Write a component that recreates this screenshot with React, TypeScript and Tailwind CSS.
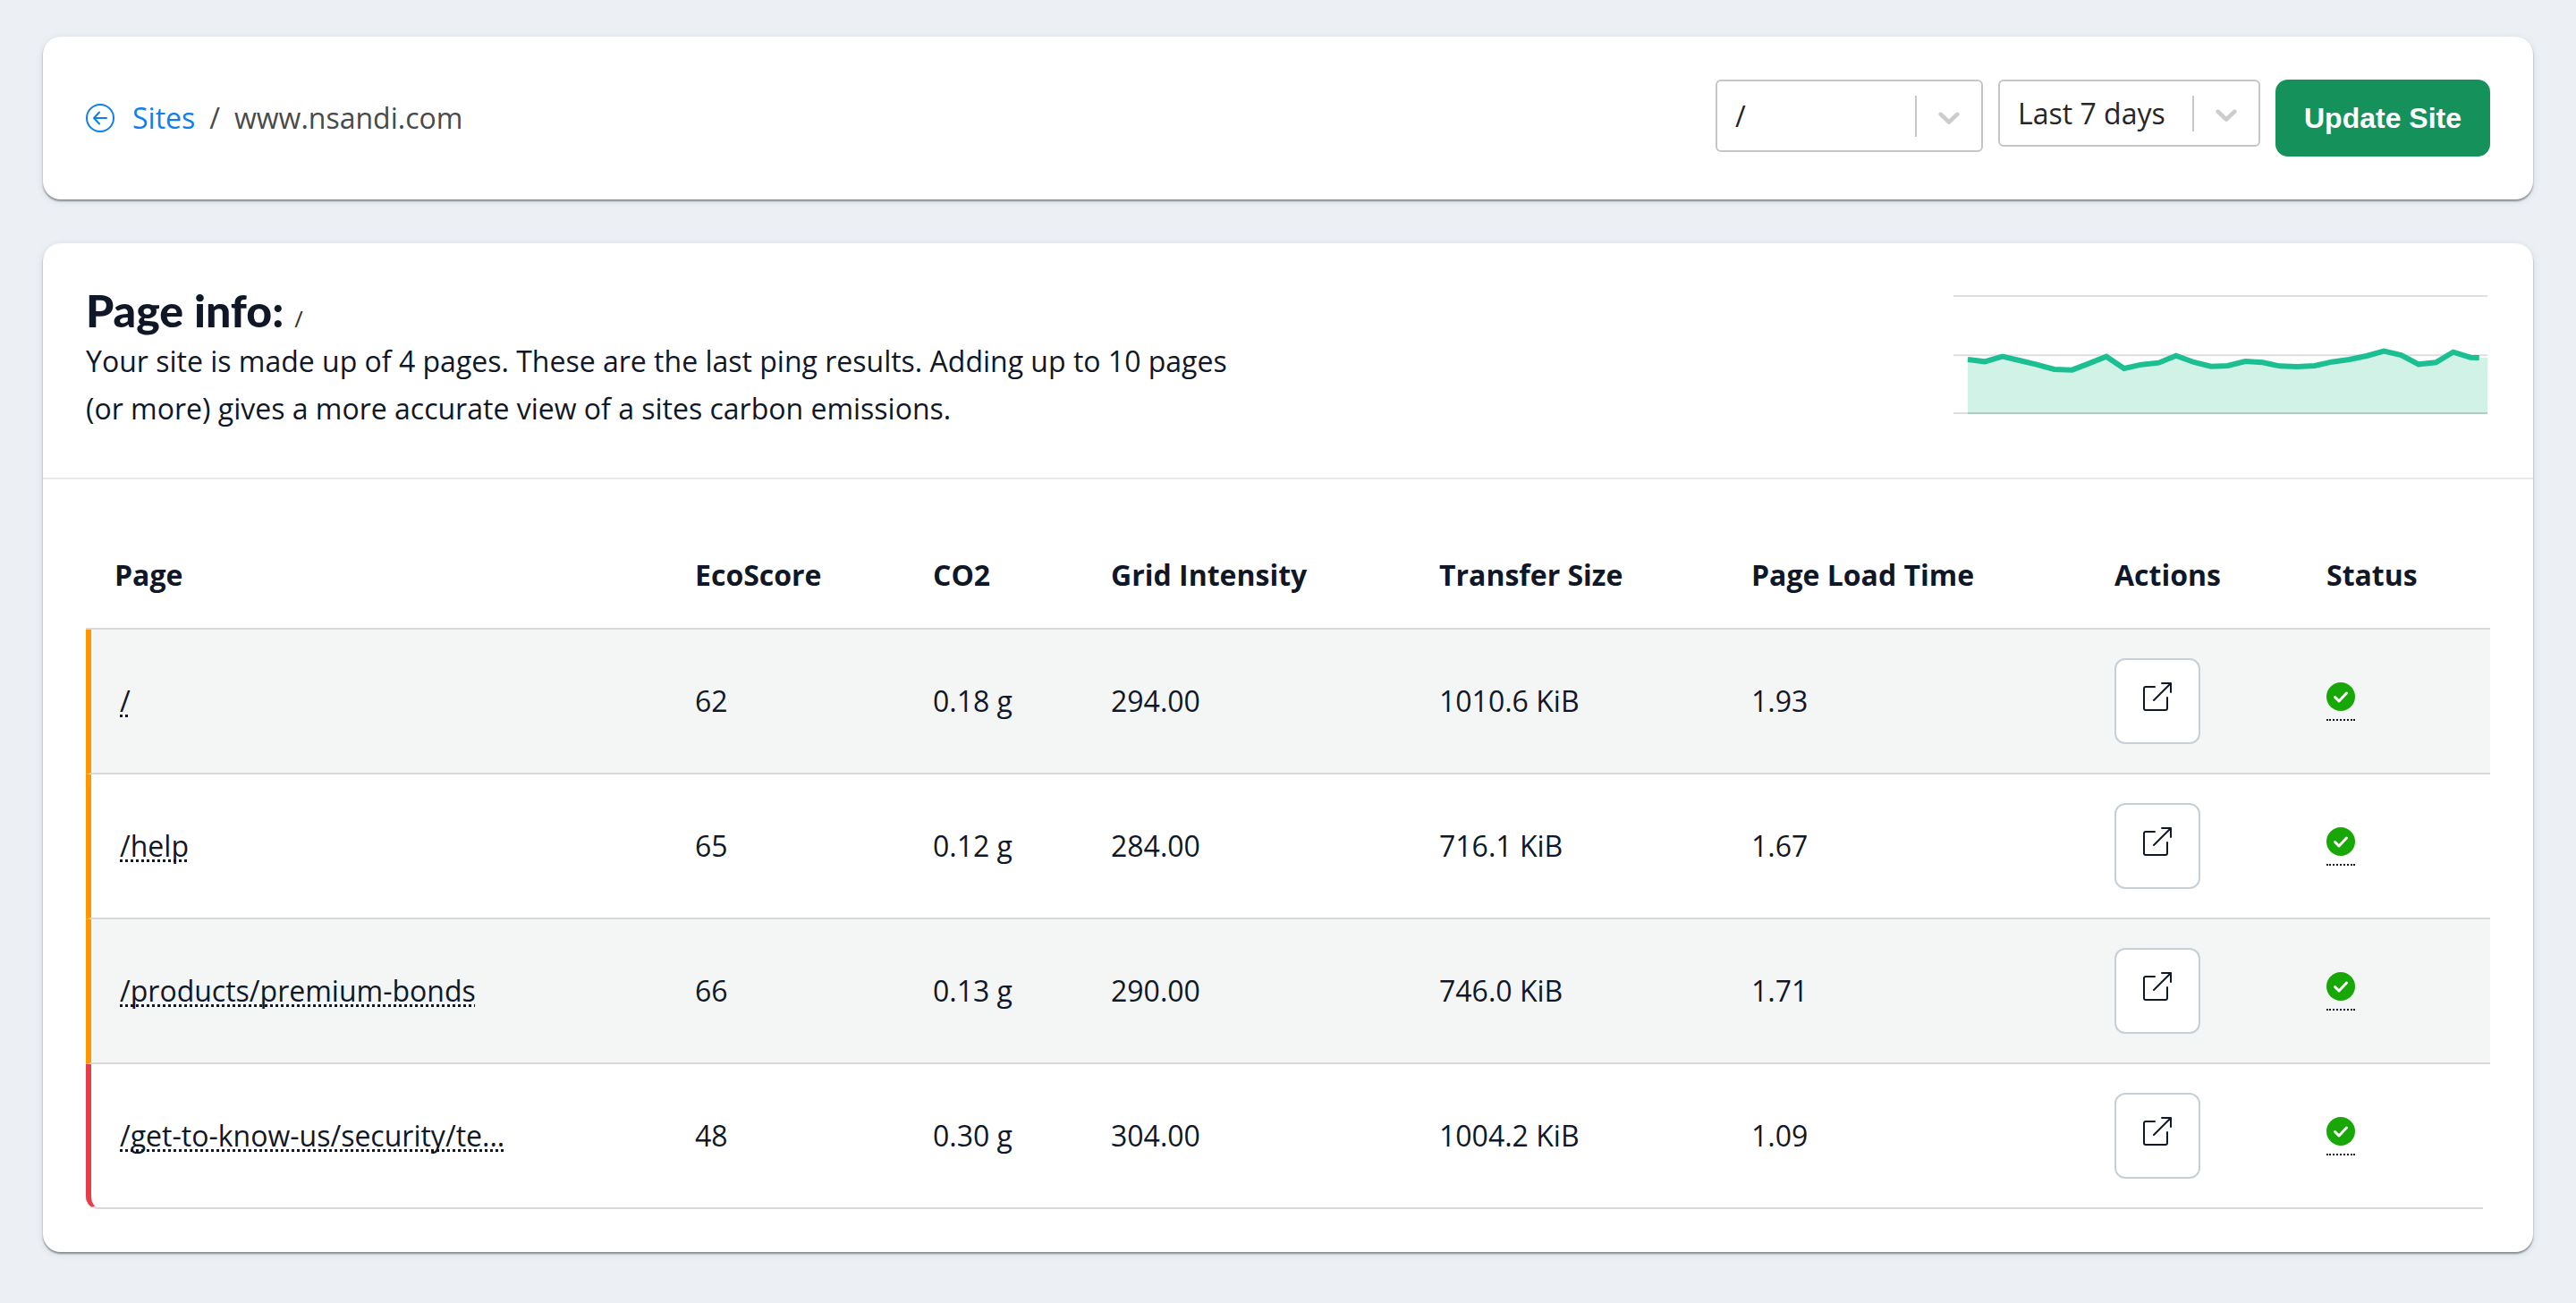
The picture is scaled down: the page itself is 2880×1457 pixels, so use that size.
import React from "react";

const rows = [
  { page: "/", eco: "62", co2: "0.18 g", grid: "294.00", size: "1010.6 KiB", time: "1.93", border: "border-l-[#ff9800]", bg: "bg-[#f4f5f5]" },
  { page: "/help", eco: "65", co2: "0.12 g", grid: "284.00", size: "716.1 KiB", time: "1.67", border: "border-l-[#ff9800]", bg: "bg-white" },
  { page: "/products/premium-bonds", eco: "66", co2: "0.13 g", grid: "290.00", size: "746.0 KiB", time: "1.71", border: "border-l-[#ff9800]", bg: "bg-[#f4f5f5]" },
  { page: "/get-to-know-us/security/te...", eco: "48", co2: "0.30 g", grid: "304.00", size: "1004.2 KiB", time: "1.09", border: "border-l-[#e53e4a]", bg: "bg-white", last: true },
];

const line = "95,275 140,282 187,265 232,278 278,292 325,308 372,310 417,288 463,265 510,305 556,292 602,286 648,262 695,284 741,298 785,296 832,281 878,285 924,297 970,299 1016,296 1062,283 1108,275 1154,263 1200,247 1246,260 1292,291 1338,285 1384,250 1430,268 1453,269";

function Chart() {
  return (
    <svg width="597" height="140" viewBox="57 50 1418 420" preserveAspectRatio="none" className="block">
      {[62, 261, 455].map((y) => (
        <line key={y} x1="57" x2="1475" y1={y} y2={y} stroke="#dedede" strokeWidth="2" vectorEffect="non-scaling-stroke" />
      ))}
      <polygon points={`95,455 ${line} 1475,269 1475,455`} fill="#d0f2e7" />
      <line x1="95" x2="1475" y1="455" y2="455" stroke="#b3c9c1" strokeWidth="2" vectorEffect="non-scaling-stroke" />
      <polyline points={line} fill="none" stroke="#1cbf92" strokeWidth="6" vectorEffect="non-scaling-stroke" />
    </svg>
  );
}

function Chevron() {
  return (
    <svg width="40" height="40" viewBox="0 0 20 20" className="mt-[3px] text-[#cccccc]" fill="currentColor">
      <path d="M4.516 7.548c.436-.446 1.043-.481 1.576 0L10 11.295l3.908-3.747c.533-.481 1.141-.446 1.574 0 .436.445.408 1.197 0 1.615-.406.418-4.695 4.502-4.695 4.502a1.095 1.095 0 0 1-1.576 0S4.924 9.581 4.516 9.163c-.409-.418-.436-1.17 0-1.615z" />
    </svg>
  );
}

function Select({ label, className, sep }: { label: string; className: string; sep: string }) {
  return (
    <div className={`flex items-center rounded-[6px] border-2 border-[#c6c6c6] bg-white text-[#262626] ${className}`}>
      <span className="flex-1 pl-[20px] text-[32px] leading-[44px]">{label}</span>
      <span className={`w-[2px] bg-[#c6c6c6] ${sep}`} />
      <span className="flex w-[72px] items-center justify-center">
        <Chevron />
      </span>
    </div>
  );
}

const headCell = "border-b-2 border-[#d8d8d8] pb-[37px] align-bottom font-bold leading-[44px]";
const cell = "border-b-2 border-[#d8d8d8]";

export default function App() {
  return (
    <div className="min-h-[1457px] bg-[#ecf0f5] pl-[48px] pr-[48px] pt-[41px] text-[#101828] [font-family:'Open_Sans','Noto_Sans',sans-serif]">
      <div className="flex h-[182px] items-center justify-between rounded-[20px] bg-white pl-[48px] pr-[48px] shadow-[0_2px_2px_rgba(60,70,80,0.55),0_2px_8px_rgba(60,70,90,0.12)]">
        <div className="flex items-center text-[32px] leading-[44px] text-[#4a4a4a]">
          <svg width="32" height="32" viewBox="0 0 32 32" fill="none" stroke="#0e7ff0" strokeWidth="2" strokeLinecap="round" strokeLinejoin="round">
            <circle cx="16" cy="16" r="15" />
            <path d="M23 16H9.5M15 9.5 9 16l6 6.5" />
          </svg>
          <span className="ml-[20px] text-[#0e7ff0]">Sites</span>
          <span className="ml-[16px]">/</span>
          <span className="ml-[16px]">www.nsandi.com</span>
        </div>
        <div className="flex items-start gap-[17px]">
          <Select label="/" className="h-[81px] w-[299px]" sep="h-[46px]" />
          <Select label="Last 7 days" className="h-[75px] w-[293px]" sep="h-[40px]" />
          <button className="h-[86px] w-[240px] rounded-[14px] bg-[#15925c] text-[32px] font-bold text-white [font-family:'Liberation_Sans',sans-serif]">
            Update Site
          </button>
        </div>
      </div>

      <div className="mt-[49px] h-[1128px] rounded-[20px] bg-white shadow-[0_2px_2px_rgba(60,70,80,0.55),0_2px_8px_rgba(60,70,90,0.12)]">
        <div className="flex h-[264px] items-start justify-between border-b-2 border-[#e8e8e8] pl-[48px] pr-[51px]">
          <div className="pt-[48px]">
            <h1 className="text-[#101828]">
              <span className="text-[50px] leading-[54px] font-black [font-family:'Lato',sans-serif]">Page info:</span>
              <span className="ml-[12px] text-[26px] leading-[54px] text-[#333333]">/</span>
            </h1>
            <p className="-mt-[6px] w-[1300px] text-[32px] leading-[53px]">
              Your site is made up of 4 pages. These are the last ping results. Adding up to 10 pages (or more) gives a more accurate view of a sites carbon emissions.
            </p>
          </div>
          <div className="pt-[55px]">
            <Chart />
          </div>
        </div>

        <div className="pl-[48px] pr-[48px]">
          <table className="w-full table-fixed border-separate border-spacing-0 text-left text-[32px]">
            <thead>
              <tr className="h-[168px]">
                <th className={`w-[681px] pl-[32px] ${headCell}`}>Page</th>
                <th className={`w-[266px] ${headCell}`}>EcoScore</th>
                <th className={`w-[199px] ${headCell}`}>CO2</th>
                <th className={`w-[367px] ${headCell}`}>Grid Intensity</th>
                <th className={`w-[349px] ${headCell}`}>Transfer Size</th>
                <th className={`w-[406px] ${headCell}`}>Page Load Time</th>
                <th className={`w-[237px] ${headCell}`}>Actions</th>
                <th className={`w-[183px] ${headCell}`}>Status</th>
              </tr>
            </thead>
            <tbody>
              {rows.map((r) => (
                <tr key={r.page} className={`h-[162px] ${r.bg}`}>
                  <td className={`border-b-2 border-l-[6px] border-b-[#d8d8d8] pl-[32px] ${r.border} ${r.last ? "rounded-bl-[14px]" : ""}`}>
                    <span className="underline decoration-dotted decoration-[3px] underline-offset-[3px] [text-decoration-skip-ink:none]">{r.page}</span>
                  </td>
                  <td className={cell}>{r.eco}</td>
                  <td className={cell}>{r.co2}</td>
                  <td className={cell}>{r.grid}</td>
                  <td className={cell}>{r.size}</td>
                  <td className={cell}>{r.time}</td>
                  <td className={cell}>
                    <div className="flex h-[96px] w-[96px] justify-center rounded-[12px] border-2 border-[#c5d0d8] bg-white pt-[25px]">
                      <svg width="32" height="32" viewBox="0 0 32 32" fill="none" stroke="#101828" strokeWidth="2" strokeLinecap="round" strokeLinejoin="round">
                        <path d="M13 5H3a2 2 0 0 0-2 2v22a2 2 0 0 0 2 2h22a2 2 0 0 0 2-2V17M12 20 31 1M21 1h10v10" />
                      </svg>
                    </div>
                  </td>
                  <td className={`${cell} ${r.last ? "[clip-path:inset(0_8px_0_0)]" : ""}`}>
                    <div className="w-fit border-b-2 border-dotted border-[#101828] pb-[9px]">
                      <svg width="32" height="32" viewBox="0 0 32 32" className="block">
                        <circle cx="16" cy="16" r="16" fill="#17a706" />
                        <path d="M9.5 16.5l4.5 4.5 8.5-9" fill="none" stroke="#fff" strokeWidth="3" strokeLinecap="round" strokeLinejoin="round" />
                      </svg>
                    </div>
                  </td>
                </tr>
              ))}
            </tbody>
          </table>
        </div>
      </div>
    </div>
  );
}
